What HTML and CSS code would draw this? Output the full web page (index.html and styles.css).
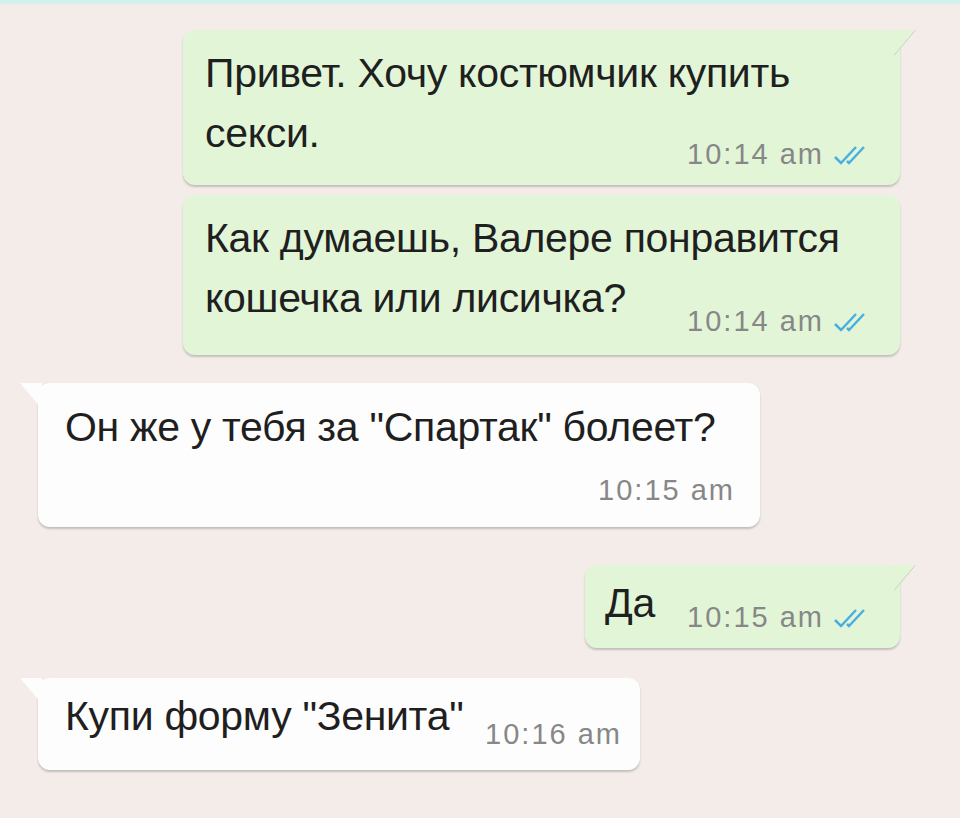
FILE: index.html
```html
<!DOCTYPE html>
<html lang="ru">
<head>
<meta charset="utf-8">
<title>Chat</title>
<link rel="stylesheet" href="styles.css">
</head>
<body>
<div class="strip"></div>
<main class="chat">
  <div class="row out r1">
    <div class="bubble out-b b1">
      <span class="tail tail-out"></span>
      <p class="text">Привет. Хочу костюмчик купить<br>секси.</p>
      <span class="meta">10:14 am <svg class="ticks" viewBox="0 0 42 22" width="42" height="22"><path d="M3 13 L9 19 L24 3 M15 17 L17 19 L32 3" fill="none" stroke="#4aaee0" stroke-width="2.5"/></svg></span>
    </div>
  </div>
  <div class="row out r2">
    <div class="bubble out-b b2">
      <p class="text">Как думаешь, Валере понравится<br>кошечка или лисичка?</p>
      <span class="meta">10:14 am <svg class="ticks" viewBox="0 0 42 22" width="42" height="22"><path d="M3 13 L9 19 L24 3 M15 17 L17 19 L32 3" fill="none" stroke="#4aaee0" stroke-width="2.5"/></svg></span>
    </div>
  </div>
  <div class="row in r3">
    <div class="bubble in-b b3">
      <span class="tail tail-in"></span>
      <p class="text">Он же у тебя за "Спартак" болеет?</p>
      <span class="meta">10:15 am</span>
    </div>
  </div>
  <div class="row out r4">
    <div class="bubble out-b b4">
      <span class="tail tail-out"></span>
      <p class="text">Да</p>
      <span class="meta">10:15 am <svg class="ticks" viewBox="0 0 42 22" width="42" height="22"><path d="M3 13 L9 19 L24 3 M15 17 L17 19 L32 3" fill="none" stroke="#4aaee0" stroke-width="2.5"/></svg></span>
    </div>
  </div>
  <div class="row in r5">
    <div class="bubble in-b b5">
      <span class="tail tail-in"></span>
      <p class="text">Купи форму "Зенита"</p>
      <span class="meta">10:16 am</span>
    </div>
  </div>
</main>
</body>
</html>
```
FILE: styles.css
```css
* { box-sizing: border-box; }
html, body { margin: 0; padding: 0; }
body {
  width: 960px;
  height: 818px;
  overflow: hidden;
  background: #f3ece9;
  font-family: "Liberation Sans", Arial, sans-serif;
  color: #1f1f1f;
}
.strip { height: 4px; background: #d4f1ee; }
.chat {
  display: flex;
  flex-direction: column;
  padding-top: 26px;
}
.row { display: flex; }
.row.out { justify-content: flex-end; padding-right: 60px; }
.row.in { justify-content: flex-start; padding-left: 38px; }
.r2 { margin-top: 10px; }
.r3 { margin-top: 28px; }
.r4 { margin-top: 38px; }
.r5 { margin-top: 30px; }

.bubble {
  position: relative;
  display: flex;
  border-radius: 12px;
  box-shadow: 0 2px 2px rgba(90, 90, 90, 0.3);
}
.out-b { background: #e2f6d7; }
.in-b { background: #fdfdfd; }

.text {
  margin: 0;
  font-size: 41px;
  line-height: 60px;
  white-space: nowrap;
  letter-spacing: -0.3px;
}
.meta {
  display: flex;
  align-items: center;
  gap: 8px;
  font-size: 29px;
  letter-spacing: 2px;
  color: #878787;
  white-space: nowrap;
}
.ticks { display: block; }

.b1, .b2 {
  display: grid;
  width: 717px;
  height: 155px;
  padding: 13px 26px 0 22px;
}
.b2 { height: 160px; }
.b1 > .text, .b1 > .meta, .b2 > .text, .b2 > .meta { grid-area: 1 / 1; }
.b1 .meta, .b2 .meta {
  justify-self: end;
  align-self: start;
  margin-top: 95px;
}
.b2 .meta { margin-top: 97px; }

.b3 {
  width: 722px;
  height: 144px;
  padding: 14px 25px 0 27px;
  flex-direction: column;
}
.b3 .meta { align-self: flex-end; margin-top: 17px; }

.b4 {
  width: 315px;
  height: 83px;
  padding: 8px 26px 0 20px;
  align-items: flex-start;
}
.b4 .meta { margin-left: auto; margin-top: 28px; }

.b5 {
  width: 602px;
  height: 92px;
  padding: 8px 18px 0 27px;
  align-items: flex-start;
}
.b5 .meta { margin-left: auto; margin-top: 32px; }

.tail {
  position: absolute;
  top: 0;
  width: 22px;
  height: 26px;
}
.tail-out {
  right: -16px;
  background: linear-gradient(to bottom right, #e2f6d7 50%, transparent 51%);
  clip-path: polygon(0 0, 100% 0, 0 100%);
}
.tail-out::after {
  content: "";
  position: absolute;
  left: 0;
  top: 0;
  width: 100%;
  height: 100%;
  background: linear-gradient(to bottom right, transparent 47%, rgba(120,120,120,0.35) 49%, transparent 53%);
}
.tail-in {
  left: -18px;
  width: 22px;
  background: #fdfdfd;
  clip-path: polygon(0 0, 100% 0, 100% 100%);
}
```
